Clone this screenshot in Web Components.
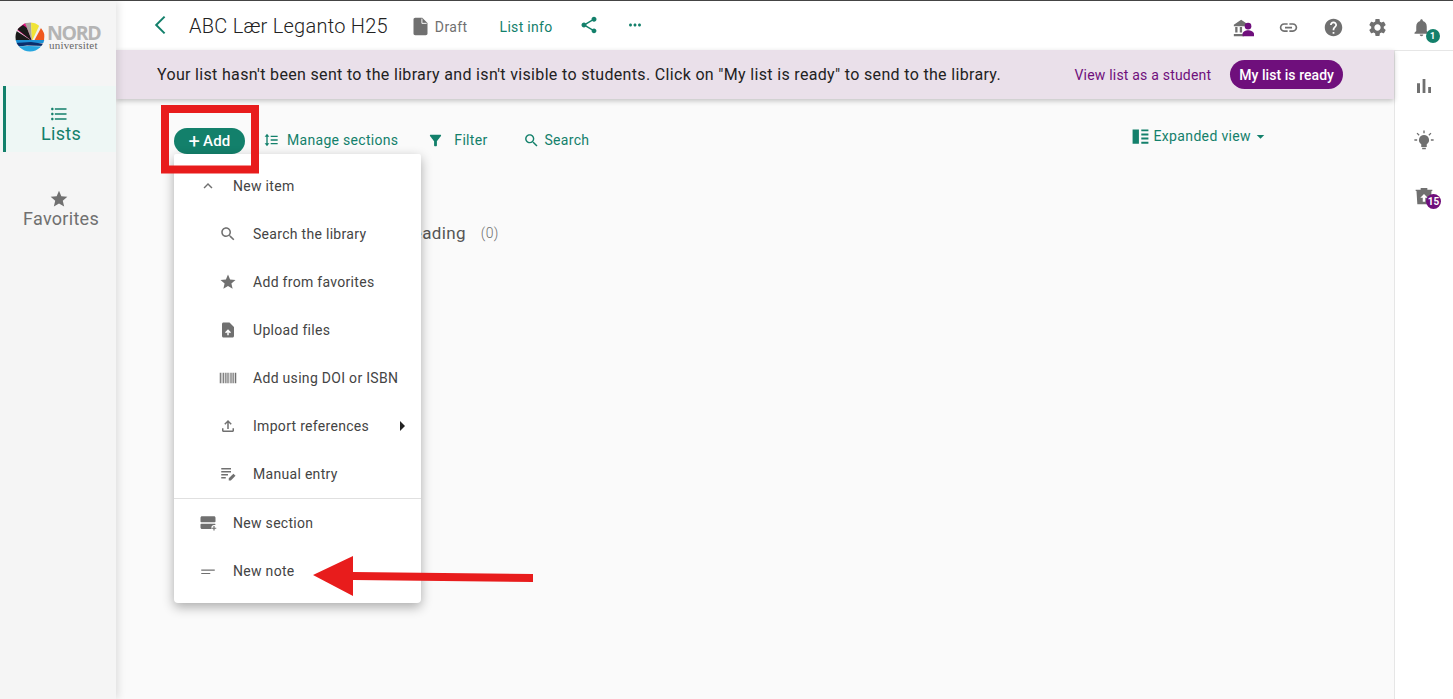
<!DOCTYPE html>
<html lang="en">
<head>
<meta charset="utf-8">
<title>ABC Lær Leganto H25</title>
<style>
    html, body { margin: 0; height: 100%; overflow: hidden; }
    body { font-family: Roboto, "Liberation Sans", sans-serif; color: #333; background: #fff; }
</style>
</head>
<body>
<app-page>
    <side-nav slot="nav"></side-nav>
    <top-bar slot="top"></top-bar>
    <list-banner slot="banner"></list-banner>
    <list-toolbar slot="toolbar"></list-toolbar>
    <list-section slot="content" count="(0)">Reading</list-section>
    <side-rail slot="rail"></side-rail>
</app-page>

<script>
const ICONS = {
    list: '<path d="M4 10.5c-.83 0-1.5.67-1.5 1.5s.67 1.5 1.5 1.5 1.5-.67 1.5-1.5-.67-1.5-1.5-1.5zm0-6c-.83 0-1.5.67-1.5 1.5S3.17 7.5 4 7.5 5.5 6.83 5.5 6 4.83 4.5 4 4.5zm0 12c-.83 0-1.5.68-1.5 1.5s.68 1.5 1.5 1.5 1.5-.68 1.5-1.5-.67-1.5-1.5-1.5zM7 19h14v-2H7v2zm0-6h14v-2H7v2zm0-8v2h14V5H7z"/>',
    star: '<path d="M12 17.27L18.18 21l-1.64-7.03L22 9.24l-7.19-.61L12 2 9.19 8.63 2 9.24l5.46 4.73L5.82 21z"/>',
    back: '<path d="M15.6 3.6L7.2 12l8.4 8.4" fill="none" stroke="currentColor" stroke-width="2"/>',
    file: '<path d="M6 2c-1.1 0-1.99.9-1.99 2L4 20c0 1.1.89 2 1.99 2H18c1.1 0 2-.9 2-2V8l-6-6H6z"/><path d="M13.6 3v5.4H19" fill="none" stroke="#fff" stroke-width="1.1"/>',
    share: '<path d="M18 16.08c-.76 0-1.44.3-1.96.77L8.91 12.7c.05-.23.09-.46.09-.7s-.04-.47-.09-.7l7.05-4.11c.54.5 1.25.81 2.04.81 1.66 0 3-1.34 3-3s-1.34-3-3-3-3 1.34-3 3c0 .24.04.47.09.7L8.04 9.81C7.5 9.31 6.79 9 6 9c-1.66 0-3 1.34-3 3s1.34 3 3 3c.79 0 1.5-.31 2.04-.81l7.12 4.16c-.05.21-.08.43-.08.65 0 1.61 1.31 2.92 2.92 2.92 1.61 0 2.92-1.31 2.92-2.92s-1.31-2.92-2.92-2.92z"/>',
    more: '<path d="M6 10c-1.1 0-2 .9-2 2s.9 2 2 2 2-.9 2-2-.9-2-2-2zm12 0c-1.1 0-2 .9-2 2s.9 2 2 2 2-.9 2-2-.9-2-2-2zm-6 0c-1.1 0-2 .9-2 2s.9 2 2 2 2-.9 2-2-.9-2-2-2z"/>',
    library: '<path d="M2 8.5L10 3l8 5.5v1.5H2zM3.500 11h2.500v6H3.500zM8.500 11h2.500v6H8.500zM2 18.500h11V21H2z"/><circle cx="17.500" cy="10" r="3.600" fill="#6f0f7c"/><path d="M11.500 21v-2.500c0-2.500 3.500-4 6-4s6.500 1.500 6.500 4V21z" fill="#6f0f7c"/>',
    link: '<path d="M3.900 12c0-1.710 1.390-3.100 3.100-3.100h4V7H7c-2.760 0-5 2.240-5 5s2.240 5 5 5h4v-1.900H7c-1.710 0-3.100-1.390-3.100-3.100zM8 13h8v-2H8v2zm9-6h-4v1.900h4c1.710 0 3.100 1.390 3.100 3.100s-1.390 3.100-3.100 3.100h-4V17h4c2.760 0 5-2.240 5-5s-2.240-5-5-5z"/>',
    help: '<path d="M12 2C6.480 2 2 6.480 2 12s4.480 10 10 10 10-4.480 10-10S17.520 2 12 2zm1 17h-2v-2h2v2zm2.070-7.750l-.9.920C13.450 12.900 13 13.500 13 15h-2v-.5c0-1.100.45-2.100 1.170-2.830l1.240-1.260c.37-.36.59-.86.59-1.410 0-1.100-.9-2-2-2s-2 .9-2 2H8c0-2.210 1.790-4 4-4s4 1.790 4 4c0 .88-.36 1.680-.93 2.250z"/>',
    gear: '<path d="M19.140 12.940c.04-.3.06-.61.06-.94 0-.32-.02-.64-.07-.94l2.030-1.580c.18-.14.23-.41.12-.61l-1.920-3.320c-.12-.22-.37-.29-.59-.22l-2.390.96c-.5-.38-1.030-.7-1.620-.94l-.36-2.540c-.04-.24-.24-.41-.48-.41h-3.840c-.24 0-.43.17-.47.41l-.36 2.540c-.59.24-1.130.57-1.620.94l-2.390-.96c-.22-.08-.47 0-.59.22L2.740 8.870c-.12.21-.08.47.12.61l2.030 1.580c-.05.3-.09.63-.09.94s.02.64.07.94l-2.030 1.580c-.18.14-.23.41-.12.61l1.920 3.320c.12.22.37.29.59.22l2.390-.96c.5.38 1.030.7 1.620.94l.36 2.540c.05.24.24.41.48.41h3.840c.24 0 .44-.17.47-.41l.36-2.540c.59-.24 1.130-.56 1.620-.94l2.390.96c.22.08.47 0 .59-.22l1.920-3.320c.12-.22.07-.47-.12-.61l-2.010-1.580zM12 15.600c-1.980 0-3.600-1.620-3.600-3.600s1.620-3.600 3.600-3.600 3.600 1.620 3.600 3.600-1.620 3.600-3.600 3.600z"/>',
    bell: '<path d="M12 22c1.100 0 2-.9 2-2h-4c0 1.100.89 2 2 2zm6-6v-5c0-3.070-1.640-5.640-4.500-6.320V4c0-.83-.67-1.500-1.500-1.500s-1.500.67-1.500 1.500v.68C7.630 5.360 6 7.920 6 11v5l-2 2v1h16v-1l-2-2z"/>',
    sort: '<path d="M6 2.500L9.500 7H7v10h2.500L6 21.500 2.500 17H5V7H2.500zM11.500 5.500H22v2H11.500zM11.500 11H22v2H11.500zM11.500 16.500H22v2H11.500z"/>',
    filter: '<path d="M4.250 5.610C6.270 8.200 10 13 10 13v6c0 .55.45 1 1 1h2c.55 0 1-.45 1-1v-6s3.720-4.800 5.740-7.390c.51-.66.04-1.610-.79-1.610H5.040c-.83 0-1.300.95-.79 1.610z"/>',
    search: '<path d="M15.500 14h-.79l-.28-.27C15.410 12.590 16 11.110 16 9.500 16 5.910 13.090 3 9.500 3S3 5.910 3 9.500 5.910 16 9.500 16c1.610 0 3.090-.59 4.230-1.570l.27.28v.79l5 4.990L20.490 19l-4.990-5zm-6 0C7.010 14 5 11.990 5 9.500S7.010 5 9.500 5 14 7.010 14 9.500 11.990 14 9.500 14z"/>',
    expanded: '<path d="M2 3h8v18H2zM13 3h9v2.500h-9zM13 8.200h9v2.500h-9zM13 13.400h9v2.500h-9zM13 18.500h9V21h-9z"/>',
    caret: '<path d="M6 9.500h12L12 15.500z"/>',
    less: '<path d="M12 8l-6 6 1.410 1.410L12 10.830l4.590 4.580L18 14z"/>',
    upfile: '<path d="M14 2H6c-1.100 0-1.990.9-1.990 2L4 20c0 1.100.89 2 1.990 2H18c1.100 0 2-.9 2-2V8z"/><path d="M8 15.010l1.410 1.410L11 14.840V19h2v-4.160l1.590 1.590L16 15.010 12.010 11z" fill="#fff"/>',
    barcode: '<path d="M1 5h1.500v14H1zM3.500 5h1v14h-1zM5.500 5h1.500v14H5.500zM8 5h1v14H8zM10 5h1.500v14H10zM12.500 5h1v14h-1zM14.500 5h1v14h-1zM16.500 5h1.500v14h-1.500zM19 5h1v14h-1zM21 5h2v14h-2z"/>',
    upload: '<path d="M18 15v3H6v-3H4v3c0 1.100.9 2 2 2h12c1.100 0 2-.9 2-2v-3h-2zM7 9l1.410 1.410L11 7.830V16h2V7.830l2.590 2.580L17 9l-5-5-5 5z"/>',
    manual: '<path d="M3 4h13v2H3zM3 8h13v2H3zM3 12h9v2H3zM3 16h6v2H3z"/><path d="M13 20.500v-2.800l6.200-6.200 2.800 2.800-6.200 6.200z"/>',
    section: '<path d="M4 3h16c1.100 0 2 .9 2 2v5c0 .55-.45 1-1 1H3c-.55 0-1-.45-1-1V5c0-1.100.9-2 2-2zM3 13h18c.3 0 .6.1.8.3v1.200H20c-2 0-3.500 1.500-3.500 3.500 0 1 .2 1.500.5 2H4c-1.100 0-2-.9-2-2v-4c0-.55.45-1 1-1z"/><path d="M19.200 16h1.600v2.200H23v1.600h-2.200V22h-1.600v-2.200H17v-1.600h2.200z"/>',
    note: '<path d="M3 10h18v1.500H3zM3 14.500h12V16H3z"/>',
    chart: '<path d="M5 9.200h3V19H5zM10.600 5h2.800v14h-2.800zm5.600 8H19v6h-2.800z"/>',
    bulb: '<path d="M12 6.500a5.500 5.500 0 0 0-3 10.100V19.500h6v-2.900a5.500 5.500 0 0 0-3-10.100zM10 20.500h4V22h-4z"/><path d="M11.250 1.500h1.500v3h-1.500zM1.500 11.250h3v1.500h-3zM19.500 11.250h3v1.500h-3zM4.900 4l2.300 2.300-1 1L3.900 5zM19.100 4l1 1-2.300 2.300-1-1z"/>',
    archive: '<path d="M3 6h18l-1 16H4zM8 2.500h8V5H8zM2 4.500h20V6H2z"/><path d="M12 9.500l-4.500 4.500H10.500v5h3v-5H16.500z" fill="#fff"/>'
};

class UiIcon extends HTMLElement {
    constructor() {
        super();
        this.attachShadow({ mode: 'open' });
    }

    connectedCallback() {
        const size = this.getAttribute('size') || '18';
        this.shadowRoot.innerHTML = `
            <style>
                :host {
                    display: inline-flex;
                    flex: none;
                    width: ${size}px;
                    height: ${size}px;
                }
                svg { display: block; width: 100%; height: 100%; fill: currentColor; }
            </style>
            <svg viewBox="0 0 24 24" aria-hidden="true">${ICONS[this.getAttribute('name')] || ''}</svg>
        `;
    }
}

class AppPage extends HTMLElement {
    constructor() {
        super();
        this.attachShadow({ mode: 'open' });
        this.shadowRoot.innerHTML = `
            <style>
                :host {
                    display: grid;
                    position: relative;
                    grid-template-columns: 116px 1fr;
                    grid-template-rows: 49px 1fr;
                    height: 699px;
                    box-sizing: border-box;
                    border-top: 1px solid #444;
                    overflow: hidden;
                }
                .nav { grid-row: 1 / 3; position: relative; z-index: 3; display: flex; }
                .top { display: flex; }
                .body { display: flex; min-height: 0; }
                .main { flex: 1; background: #fafafa; display: flex; flex-direction: column; position: relative; }
                .rail { width: 59px; display: flex; }
                .marks { position: absolute; inset: -1px 0 0 0; width: 1453px; height: 699px; pointer-events: none; z-index: 9; }
            </style>
            <div class="nav"><slot name="nav"></slot></div>
            <div class="top"><slot name="top"></slot></div>
            <div class="body">
                <div class="main">
                    <slot name="banner"></slot>
                    <slot name="toolbar"></slot>
                    <slot name="content"></slot>
                </div>
                <div class="rail"><slot name="rail"></slot></div>
            </div>
            <svg class="marks" viewBox="0 0 1453 699">
                <rect x="165" y="109" width="90" height="60.500" fill="none" stroke="#e81c1c" stroke-width="8"/>
                <path d="M313 575L353 556V572L533 574V582L353 580V596Z" fill="#e81c1c"/>
            </svg>
        `;
    }
}

class SideNav extends HTMLElement {
    constructor() {
        super();
        this.attachShadow({ mode: 'open' });
        this.shadowRoot.innerHTML = `
            <style>
                :host {
                    display: flex;
                    flex-direction: column;
                    width: 116px;
                    box-sizing: border-box;
                    background: #f5f5f5;
                    box-shadow: 2px 0 8px rgba(0,0,0,.12);
                    padding: 21px 0 0 3px;
                }
                .logo { display: flex; align-items: center; gap: 2px; height: 30px; margin: 0 0 34px 12px; }
                .logo svg { width: 30px; height: 30px; flex: none; }
                .word { display: flex; flex-direction: column; line-height: 1; color: #b4b4b4; }
                .word b { font: 700 19.500px/16px "Open Sans", sans-serif; letter-spacing: -1.300px; }
                .word span { font: 11px/9px "Liberation Serif", serif; color: #666; letter-spacing: .2px; margin-left: 2px; }
                .item {
                    display: flex; flex-direction: column; align-items: center;
                    height: 66px; padding-top: 18px; box-sizing: border-box;
                    font-size: 18px; line-height: 22px; letter-spacing: .3px; color: #707070;
                    border-left: 3px solid transparent;
                }
                .item ui-icon { margin-left: -4px; }
                .item span { margin-top: -1px; }
                .item.on { background: #eef7f5; border-left-color: #13806b; color: #13806b; }
                .fav { margin-top: 35px; padding-top: 2px; }
            </style>
            <div class="logo">
                <svg viewBox="0 0 30 30">
                    <defs><clipPath id="c"><circle cx="15" cy="15" r="14.500"/></clipPath></defs>
                    <g clip-path="url(#c)">
                        <rect width="30" height="30" fill="#f0f0ee"/>
                        <path d="M17 19L2 8L10 0L12 1Z" fill="#e0127f"/>
                        <path d="M17 19L0 8V19Z" fill="#1a1a1a"/>
                        <path d="M17 19L2 7L8 3L12 6Z" fill="#1a1a1a"/>
                        <path d="M17 19L10 1L16 0Z" fill="#a8a8a0"/>
                        <path d="M17 19L16 0L25 2Z" fill="#f0e436"/>
                        <path d="M19 19L26 6L30 12L29 19Z" fill="#f0581e"/>
                        <path d="M0 18L30 18V21L14 21L0 23Z" fill="#1b8fd4"/>
                        <path d="M0 21L16 20L30 22V24L12 23.500L0 25Z" fill="#0b2d6b"/>
                        <path d="M0 24.500L14 24L30 24.500V30H0Z" fill="#27a6e0"/>
                    </g>
                </svg>
                <div class="word"><b>NORD</b><span>universitet</span></div>
            </div>
            <div class="item on"><ui-icon name="list" size="20"></ui-icon><span>Lists</span></div>
            <div class="item fav"><ui-icon name="star" size="20"></ui-icon><span>Favorites</span></div>
        `;
    }
}

class TopBar extends HTMLElement {
    constructor() {
        super();
        this.attachShadow({ mode: 'open' });
        this.shadowRoot.innerHTML = `
            <style>
                :host { display: flex; flex: 1; align-items: center; background: #fff; padding: 0 21px 0 33px; }
                .back { color: #13806b; margin-right: 16px; position: relative; top: -1px; }
                h1 { font-size: 20px; font-weight: 300; letter-spacing: .25px; color: #222; margin: 0 22px 0 0; }
                .draft { display: flex; align-items: center; gap: 4px; font-size: 14px; color: #707070; margin-right: 32px; letter-spacing: .4px; position: relative; top: 1px; }
                .info { font-size: 14px; color: #13806b; margin-right: 26px; letter-spacing: .3px; position: relative; top: 1px; }
                .share { color: #13806b; margin-right: 27px; position: relative; top: -1px; }
                .more { color: #13806b; position: relative; top: -1px; }
                .tools { display: flex; align-items: center; gap: 23px; margin-left: auto; color: #707070; position: relative; top: 2px; }
                .bell { position: relative; display: flex; }
                .badge {
                    position: absolute; left: 14.500px; top: 11.500px;
                    width: 14px; height: 14px; border-radius: 50%;
                    background: #13806b; color: #fff;
                    font-size: 9px; font-weight: 700; line-height: 14px; text-align: center;
                }
            </style>
            <ui-icon class="back" name="back" size="24"></ui-icon>
            <h1>ABC Lær Leganto H25</h1>
            <div class="draft"><ui-icon name="file" size="21"></ui-icon><span>Draft</span></div>
            <div class="info">List info</div>
            <ui-icon class="share" name="share" size="20"></ui-icon>
            <ui-icon class="more" name="more" size="18"></ui-icon>
            <div class="tools">
                <ui-icon name="library" size="22" style="margin-right:1px"></ui-icon>
                <ui-icon name="link" size="21" style="margin-right:1px"></ui-icon>
                <ui-icon name="help" size="21"></ui-icon>
                <ui-icon name="gear" size="21"></ui-icon>
                <div class="bell"><ui-icon name="bell" size="21"></ui-icon><span class="badge">1</span></div>
            </div>
        `;
    }
}

class ListBanner extends HTMLElement {
    constructor() {
        super();
        this.attachShadow({ mode: 'open' });
        this.shadowRoot.innerHTML = `
            <style>
                :host {
                    display: flex; align-items: center;
                    height: 49px; padding: 0 51px 0 41px; box-sizing: border-box;
                    background: #eae0ea;
                    box-shadow: 0 2px 5px rgba(0,0,0,.22);
                    position: relative; z-index: 1;
                    font-size: 16px; color: #222;
                }
                p { margin: 0; letter-spacing: .33px; white-space: nowrap; }
                a { margin-left: auto; color: #6f0f7c; font-size: 14px; letter-spacing: .2px; white-space: nowrap; }
                button {
                    margin-left: 19px; height: 29px; padding: 0 9px;
                    border: 0; border-radius: 15px;
                    background: #6f0f7c; color: #fff;
                    font: 500 14px Roboto, sans-serif; letter-spacing: .05px;
                }
            </style>
            <p>Your list hasn't been sent to the library and isn't visible to students. Click on "My list is ready" to send to the library.</p>
            <a>View list as a student</a>
            <button>My list is ready</button>
        `;
    }
}

class ListToolbar extends HTMLElement {
    constructor() {
        super();
        this.attachShadow({ mode: 'open' });
        this.shadowRoot.innerHTML = `
            <style>
                :host {
                    display: flex; align-items: center;
                    height: 84px; padding: 0 126px 0 58px;
                    color: #13806b; font-size: 14px; letter-spacing: .3px;
                }
                .add-wrap { position: relative; margin-right: 18px; }
                .add {
                    display: flex; align-items: center; justify-content: center; gap: 3px;
                    width: 71px; height: 26px; border: 0; border-radius: 13px;
                    background: #13806b; color: #fff;
                    font: 500 15px Roboto, sans-serif; letter-spacing: .2px; padding: 0;
                }
                .plus { font-size: 20px; font-weight: 400; line-height: 1; }
                .tool { display: flex; align-items: center; position: relative; top: -1px; }
                .manage ui-icon { margin-right: 8px; }
                .manage { margin-right: 29px; }
                .filter ui-icon { margin-right: 10px; }
                .filter { margin-right: 36px; }
                .search ui-icon { margin-right: 4px; }
                .view { margin-left: auto; top: -5px; letter-spacing: .35px; }
                .view .e { margin-right: 4px; }
                .view .c { margin-left: 2px; }
                add-menu { position: absolute; left: 0; top: 26px; z-index: 5; }
            </style>
            <div class="add-wrap">
                <button class="add"><span class="plus">+</span>Add</button>
                <add-menu></add-menu>
            </div>
            <div class="tool manage"><ui-icon name="sort" size="16"></ui-icon>Manage sections</div>
            <div class="tool filter"><ui-icon name="filter" size="17"></ui-icon>Filter</div>
            <div class="tool search"><ui-icon name="search" size="17"></ui-icon>Search</div>
            <div class="tool view"><ui-icon class="e" name="expanded" size="19"></ui-icon>Expanded view<ui-icon class="c" name="caret" size="15"></ui-icon></div>
        `;
    }
}

class MenuItem extends HTMLElement {
    constructor() {
        super();
        this.attachShadow({ mode: 'open' });
    }

    connectedCallback() {
        const sub = this.hasAttribute('sub');
        const more = this.hasAttribute('more');
        this.shadowRoot.innerHTML = `
            <style>
                :host {
                    display: flex; align-items: center;
                    height: 48px; padding-left: ${sub ? 45 : 25}px;
                    font-size: 14px; letter-spacing: .3px; color: #444;
                    position: relative;
                }
                ui-icon { color: #707070; margin-right: 16px; }
                .more {
                    position: absolute; right: 16px; top: 19px;
                    border-left: 5px solid #222; border-top: 5px solid transparent; border-bottom: 5px solid transparent;
                }
            </style>
            <ui-icon name="${this.getAttribute('icon')}" size="18"></ui-icon>
            <span><slot></slot></span>
            ${more ? '<i class="more"></i>' : ''}
        `;
    }
}

class AddMenu extends HTMLElement {
    constructor() {
        super();
        this.attachShadow({ mode: 'open' });
        this.shadowRoot.innerHTML = `
            <style>
                :host {
                    display: block; width: 247px; box-sizing: border-box;
                    padding: 8px 0; background: #fff;
                    border-radius: 2px 2px 4px 4px;
                    box-shadow: 0 4px 12px rgba(0,0,0,.32);
                    white-space: nowrap;
                }
                hr { margin: 0; border: 0; border-top: 1px solid #e0e0e0; }
            </style>
            <menu-item icon="less">New item</menu-item>
            <menu-item sub icon="search">Search the library</menu-item>
            <menu-item sub icon="star">Add from favorites</menu-item>
            <menu-item sub icon="upfile">Upload files</menu-item>
            <menu-item sub icon="barcode">Add using DOI or ISBN</menu-item>
            <menu-item sub more icon="upload">Import references</menu-item>
            <menu-item sub icon="manual">Manual entry</menu-item>
            <hr>
            <menu-item icon="section">New section</menu-item>
            <menu-item icon="note">New note</menu-item>
        `;
    }
}

class ListSection extends HTMLElement {
    constructor() {
        super();
        this.attachShadow({ mode: 'open' });
        this.shadowRoot.innerHTML = `
            <style>
                :host {
                    display: flex; align-items: center; gap: 15px;
                    margin: 38px 0 0 286px;
                    height: 24px; color: #555; font-size: 17px; letter-spacing: .35px;
                    white-space: nowrap;
                }
                .count { font-size: 14px; color: #707070; font-weight: 300; }
            </style>
            <span><slot></slot></span><span class="count">${this.getAttribute('count')}</span>
        `;
    }
}

class SideRail extends HTMLElement {
    constructor() {
        super();
        this.attachShadow({ mode: 'open' });
        this.shadowRoot.innerHTML = `
            <style>
                :host {
                    display: flex; flex-direction: column; align-items: center;
                    flex: 1; background: #fff;
                    border-left: 1px solid #e6e6e6; border-top: 1px solid #e6e6e6;
                    padding-top: 23px; color: #707070;
                }
                .bulb { margin-top: 31px; }
                .arch { position: relative; display: flex; margin-top: 35px; }
                .badge {
                    position: absolute; left: 12px; top: 8px;
                    width: 15px; height: 15px; border-radius: 50%;
                    background: #6f0f7c; color: #fff;
                    font-size: 10px; font-weight: 700; line-height: 15px; text-align: center;
                }
            </style>
            <ui-icon name="chart" size="24"></ui-icon>
            <ui-icon class="bulb" name="bulb" size="22"></ui-icon>
            <div class="arch"><ui-icon name="archive" size="20"></ui-icon><span class="badge">15</span></div>
        `;
    }
}

customElements.define('ui-icon', UiIcon);
customElements.define('menu-item', MenuItem);
customElements.define('add-menu', AddMenu);
customElements.define('side-nav', SideNav);
customElements.define('top-bar', TopBar);
customElements.define('list-banner', ListBanner);
customElements.define('list-toolbar', ListToolbar);
customElements.define('list-section', ListSection);
customElements.define('side-rail', SideRail);
customElements.define('app-page', AppPage);
</script>
</body>
</html>
